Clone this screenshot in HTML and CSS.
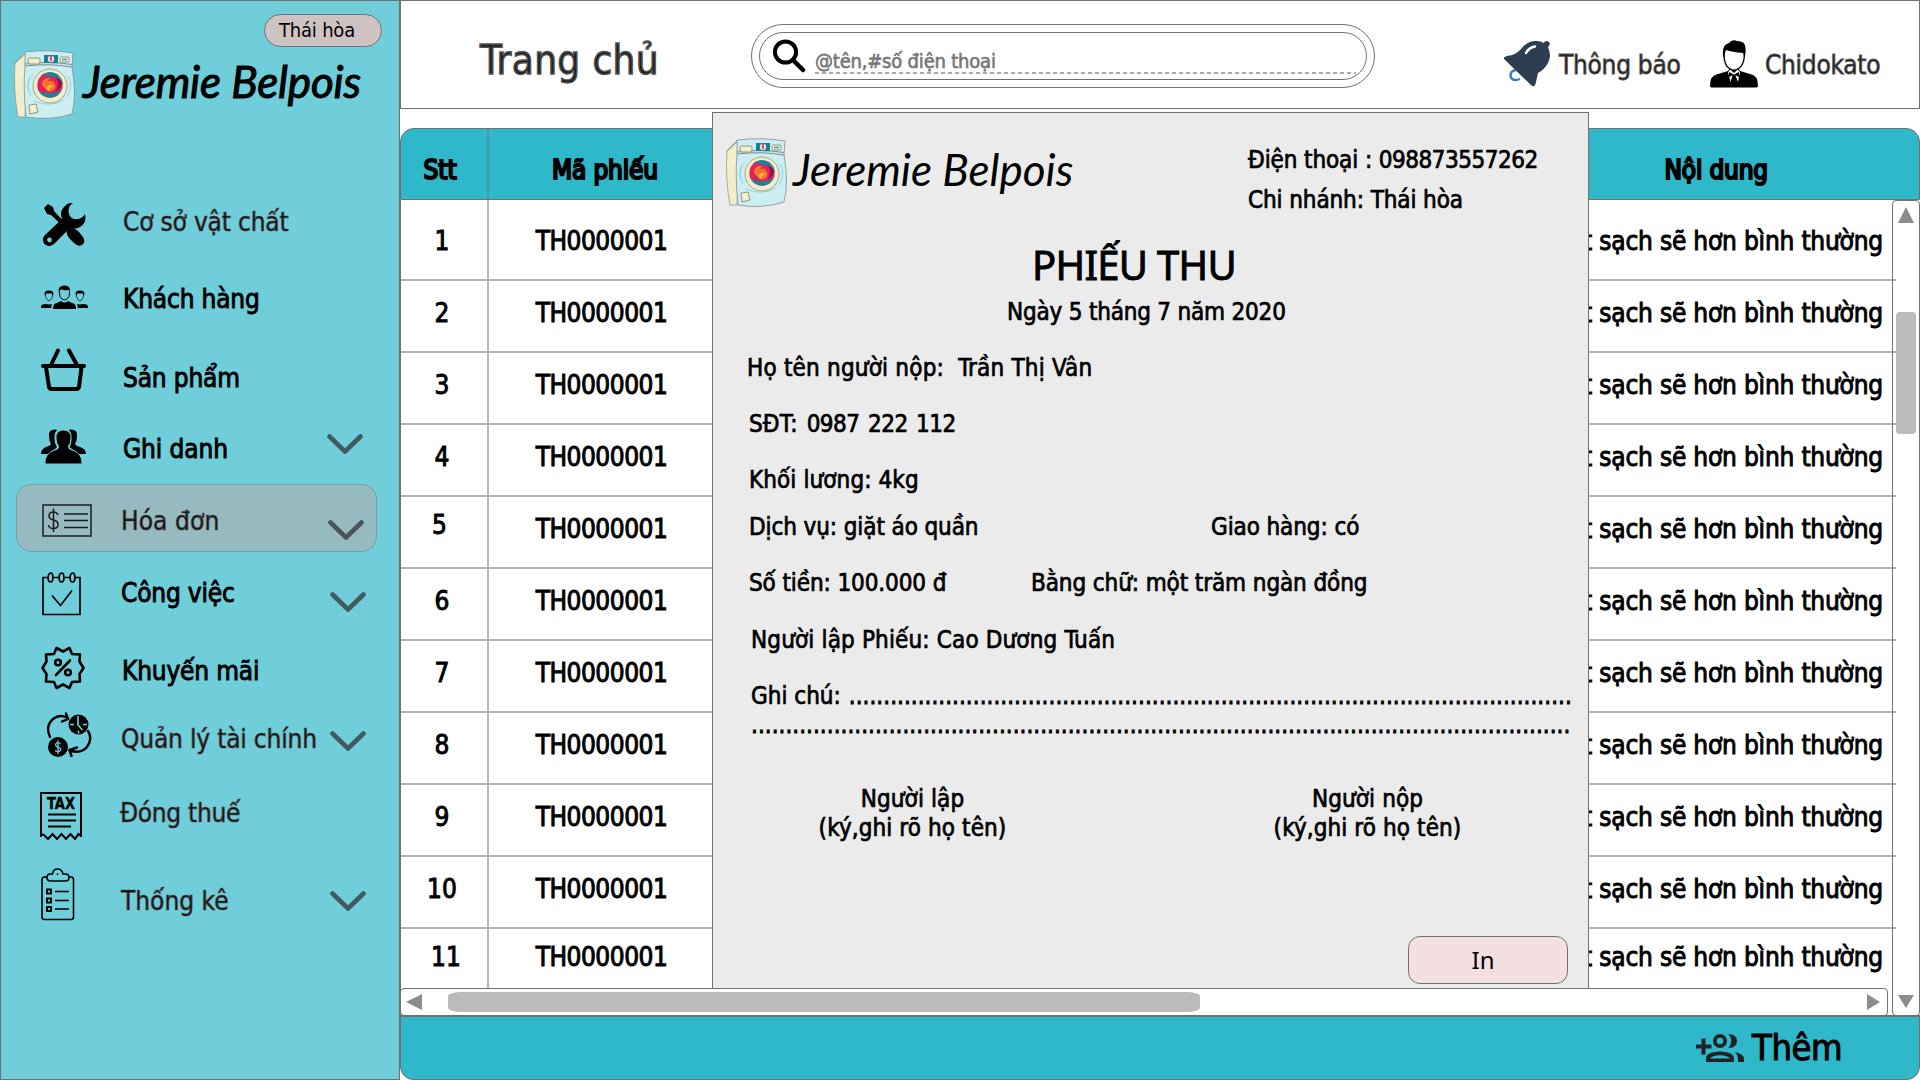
FILE: index.html
```html
<!DOCTYPE html>
<html lang="vi">
<head>
<meta charset="utf-8">
<title>Jeremie Belpois</title>
<link rel="stylesheet" href="styles.css">
</head>
<body>
<svg class="defs" width="0" height="0" aria-hidden="true">
  <symbol id="washer" viewBox="0 0 62 70">
    <path d="M1 13 L11 2 L14 17 L11 67 L4 67 Q-1 40 1 13Z" fill="#f0eecb" stroke="#8b8f86" stroke-width=".7"/>
    <path d="M11 2 Q35 -1 59 3 L58 17 Q63 45 58 64 Q36 71 12 67 Q9 40 11 16Z" fill="#cdeef1" stroke="#7d8f94" stroke-width=".8"/>
    <path d="M11 16 Q35 13 58 17 M1 13 L11 4 M11 14 Q35 11 58 14.500" fill="none" stroke="#6f7f86" stroke-width=".9"/>
    <rect x="14" y="8" width="12" height="6" rx="2" fill="#f0eecb" stroke="#86816b" stroke-width=".8"/>
    <rect x="30" y="5" width="14" height="8" fill="#127f97"/>
    <circle cx="37" cy="9" r="3.200" fill="#e9e1d3"/><path d="M37 6v5" stroke="#d0234e" stroke-width="1.500"/>
    <rect x="46" y="7" width="9" height="5" rx="1" fill="#f0eecb" stroke="#86816b" stroke-width=".8"/><path d="M48 9.500h5" stroke="#2ba4b6" stroke-width="1.500"/>
    <path d="M16 27 Q11 36 17 46 M19 24 Q12 32 15 42 M55 27 Q59 38 53 47 M20 51 Q35 58 50 50" fill="none" stroke="#8ed6de" stroke-width="1"/>
    <circle cx="36" cy="36" r="17" fill="#f0eecb" stroke="#a39d7d" stroke-width=".9"/>
    <circle cx="36" cy="35" r="12.700" fill="#e41f5c"/>
    <path d="M36 22.300 A12.700 12.700 0 0 1 48.700 35 Q44 25 36 27 Q30 23 26 27 A12.700 12.700 0 0 1 36 22.300Z" fill="#15889b"/>
    <path d="M24 39 Q28 44 36 43 Q43 44 48 38 A12.700 12.700 0 0 1 36 47.700 A12.700 12.700 0 0 1 24 39Z" fill="#15889b"/>
    <path d="M41 26 Q47 33 42 41 Q48 38 48 32Z" fill="#8e1044"/>
    <path d="M28 35 Q28 27 37 28 Q31 31 31 38Z" fill="#f0842a"/>
    <circle cx="36" cy="36" r="5.500" fill="#f4702b"/><path d="M32 38 Q36 32 40 37 Q37 36 35 41Z" fill="#ffb13d"/>
    <path d="M15 55 L22 54 L24 62 L16 64Z" fill="#f0eecb" stroke="#8d8a72" stroke-width=".9"/>
  </symbol>
  <symbol id="chevron" viewBox="0 0 36 20">
    <path d="M2.500 2.500 L18 17.500 L33.500 2.500" fill="none" stroke="#333" stroke-opacity=".75" stroke-width="4.600" stroke-linecap="round"/>
  </symbol>
</svg>

<div class="app">
  <aside class="sidebar">
    <div class="branch">Thái hòa</div>
    <div class="brand"><svg class="brand-icon"><use href="#washer"/></svg><span class="brand-name">Jeremie Belpois</span></div>
    <ul class="menu">
      <li class="item facility light">
        <span class="ic"><svg width="44" height="44" viewBox="0 0 44 44"><path d="M2 5 L6 1 L11 4 L12 8 L28 25 Q33 25 37 29 L41 34 Q44 39 40 42 Q36 44 32 40 L27 35 Q24 31 25 27 L9 12 L5 11Z"/><path d="M31 0 Q25 4 27 11 Q29 17 35 16 Q40 16 43 11 Q45 20 38 24 Q33 27 28 25 L12 41 Q7 45 2.500 41 Q-1 36 3 32 L20 16 Q17 8 23 3 Q27 -1 31 0Z"/><circle cx="7.500" cy="37" r="2.400" fill="#70ceda"/></svg></span>
        <span class="label">Cơ sở vật chất</span></li>
      <li class="item customers">
        <span class="ic"><svg width="47" height="26" viewBox="0 0 47 26"><path d="M12 24 Q12 18 16 18 L20 16 Q23.500 19 27 16 L31 18 Q35 18 35 24Z"/><path d="M18.500 7 Q18 12 21 14 Q23.500 16 26 14 Q29 12 28.500 7" fill="none" stroke="#000" stroke-width="1"/><path d="M18 8 Q16 1 23 .5 Q30 0 29 8 L28 5 Q22 6 20 4Z"/><path d="M0 23 Q-1 19 5 19 L8 19.500 L11 19 Q10 21 10.500 23Z M47 23 Q48 19 42 19 L39 19.500 L36 19 Q37 21 36.500 23Z"/><path d="M4.500 9 Q4 14 8 16 Q12 14 11.500 9 M35.500 9 Q35 14 39 16 Q43 14 42.500 9" fill="none" stroke="#000" stroke-width=".7"/><path d="M4 11 Q2 5.500 8 5.500 Q14 5.500 12 11 L11 8.500 L5 8.500Z M35 11 Q33 5.500 39 5.500 Q45 5.500 43 11 L42 8.500 L36 8.500Z"/></svg></span>
        <span class="label">Khách hàng</span></li>
      <li class="item products">
        <span class="ic"><svg width="45" height="44" viewBox="0 0 45 44" fill="none" stroke="#000" stroke-width="4" stroke-linecap="round" stroke-linejoin="round"><path d="M2 18H43M10 17 L17 2.500M36 17 L28 2.500M5 19 L8 39 Q8.500 41 11 41 H35 Q37.500 41 38 39 L40.500 19"/></svg></span>
        <span class="label">Sản phẩm</span></li>
      <li class="item enroll">
        <span class="ic"><svg width="45" height="35" viewBox="0 0 45 35"><path d="M15 .5 Q7 0 8 7 Q8 12 10 15 Q9 17 5 18 Q0 20 0 25 H7 Q9 22 14 20 L16 18 Q13 14 13.500 7 Q14 3 16 1Z M29 .5 Q37 0 36 7 Q36 12 34 15 Q35 17 39 18 Q45 20 45 25 H38 Q36 22 31 20 L28.500 18 Q31 14 30.500 7 Q30 3 28 1Z"/><path d="M22.500 1.500 Q15 1.500 15.500 9 Q15.500 14 18 17 Q18 20 15 21 Q4 24 4.500 34.500 H40.500 Q41 24 30 21 Q27 20 27 17 Q29.500 14 29.500 9 Q30 1.500 22.500 1.500Z"/></svg></span>
        <span class="label">Ghi danh</span><svg class="chev"><use href="#chevron"/></svg></li>
      <li class="item invoices light active">
        <span class="ic"><svg width="50" height="33" viewBox="0 0 50 33" fill="none" stroke="#1c1c1c" stroke-width="1.500"><path d="M1 1H49V32H1ZM22 10H46M22 16.500H46M22 23.500H46"/><path d="M16 11 Q15 8 11.500 8 Q7 8 7 12 Q7 15 11.500 16 Q16 17 16 20.500 Q16 24.500 11.500 24.500 Q7 24.500 6.500 21M11.500 4.500V28"/></svg></span>
        <span class="label">Hóa đơn</span><svg class="chev"><use href="#chevron"/></svg></li>
      <li class="item tasks">
        <span class="ic"><svg width="39" height="44" viewBox="0 0 39 44" fill="none" stroke="#000" stroke-width="1.700"><path d="M6 5.500H1V42.500H38V5.500H33M11.500 5.500H17M22.500 5.500H28"/><ellipse cx="8.500" cy="5.500" rx="2.400" ry="4.500"/><ellipse cx="19.500" cy="5.500" rx="2.400" ry="4.500"/><ellipse cx="30.500" cy="5.500" rx="2.400" ry="4.500"/><path d="M10 23.500 L18.500 33.500 L30 18.500"/></svg></span>
        <span class="label">Công việc</span><svg class="chev"><use href="#chevron"/></svg></li>
      <li class="item promo">
        <span class="ic"><svg width="44" height="44" viewBox="0 0 44 44" fill="none" stroke="#000" stroke-width="2.600" stroke-linejoin="round" stroke-linecap="round"><path d="M22 5.500 L28.500 2 L31 8 L39 8.500 L38.500 15.500 L42.500 22 L38.500 28 L39 35.500 L31 36 L28.500 42 L22 38.500 L15.500 42 L13 36 L5 35.500 L5.500 28 L1.500 22 L5.500 15.500 L5 8.500 L13 8 L15.500 2Z"/><path d="M29 14.500 L15 29"/><circle cx="17" cy="16.500" r="2.800"/><circle cx="27" cy="26.500" r="2.800"/></svg></span>
        <span class="label">Khuyến mãi</span></li>
      <li class="item finance light">
        <span class="ic"><svg width="46" height="45" viewBox="0 0 46 45"><g fill="none" stroke="#000" stroke-width="2.400" stroke-linecap="round"><path d="M4 25 Q-1 14 7 7 Q13 2 21 5.500M20 1.500 L22 7 L16 9.500M42 19 Q47 27 41 35 Q35 42 24 38.500M31 35.500 L23.500 38 L25.500 44"/></g><circle cx="32.500" cy="12.500" r="10"/><circle cx="12" cy="35" r="10"/><g fill="none" stroke="#70ceda"><path d="M32 4V13L36.500 18" stroke-width="1.600"/><path d="M24 12.500h4M37 12.500h4M32.500 18.500v3" stroke-width="1.500"/><path d="M14.500 32 Q12 29.500 10 31.500 Q8.500 34 12 35 Q15.500 36 14.500 38.500 Q12 41 9 38.500M12 28.500V42" stroke-width="1.300"/></g></svg></span>
        <span class="label">Quản lý tài chính</span><svg class="chev"><use href="#chevron"/></svg></li>
      <li class="item tax light">
        <span class="ic"><svg width="43" height="48" viewBox="0 0 43 48" fill="none" stroke="#000" stroke-width="2"><path d="M1 45V1H41V45M1 42 L4 43 L8 47 L12.500 42 L17 47 L21.500 42 L26 47 L30.500 42 L35 47 L38.500 42 L41 44M8 22.500H36M8 28.500H36M8 34.500H31"/><text class="tax-text" x="7" y="17" textLength="28" lengthAdjust="spacingAndGlyphs">TAX</text></svg></span>
        <span class="label">Đóng thuế</span></li>
      <li class="item stats light">
        <span class="ic"><svg width="34" height="53" viewBox="0 0 34 53" fill="none" stroke="#000" stroke-width="1.600"><path d="M6 9H3.500Q1 9 1 12V49Q1 51.500 3.500 51.500H30Q32.500 51.500 32.500 49V12Q32.500 9 30 9H28"/><path d="M9 6H11.500Q12 1 16.500 1Q21 1 22 6H24.500Q28 6 28 9.500Q28 13 24.500 13H9.500Q6 13 6 9.500Q6 6 9 6Z"/><path d="M16.500 5.500v1.500"/><path d="M14 23.500H28M14 32.500H28M14 41H28"/><g stroke-width="2"><path d="M6 21.500h4v4h-4zM6 30.500h4v4h-4zM6 39h4v4h-4z"/></g></svg></span>
        <span class="label">Thống kê</span><svg class="chev"><use href="#chevron"/></svg></li>
    </ul>
  </aside>

  <main class="main">
    <header class="topbar">
      <h1 class="page-title">Trang chủ</h1>
      <div class="search"><div class="search-inner">
        <svg width="34" height="34" viewBox="0 0 34 34" fill="none" stroke="#000"><circle cx="13.500" cy="13" r="10.600" stroke-width="4"/><path d="M21 21 L31 31" stroke-width="4.500" stroke-linecap="round"/></svg>
        <div class="search-field">@tên,#số điện thoại</div>
      </div></div>
      <div class="notice">
        <svg width="47" height="48" viewBox="0 0 47 48"><path d="M12 30 Q6 31 6.500 36 Q8 42 16 39" fill="none" stroke="#2f7cc4" stroke-width="2.400"/><path d="M0 19 Q-1 17 3 16 Q12 15 17 9 Q24 0 33 1 Q37 1 39.500 3 Q42 -.5 45 2 Q47 4 44 7 Q48 16 44 23 Q40 30 34 33 Q33 38 31.500 44 Q30 48 27 45Z" fill="#2c3e50"/><path d="M22 13 Q25 7.500 31 6.500" fill="none" stroke="#fff" stroke-width="2.400" stroke-linecap="round"/></svg>
        <span>Thông báo</span>
      </div>
      <div class="user">
        <svg width="48" height="48" viewBox="0 0 48 48"><path d="M14 14 Q14 26 20 29 Q24 31.500 28 29 Q34 26 34.500 14" fill="#fff" stroke="#000" stroke-width="1.300"/><path d="M13.500 18 Q11 5 19 3 Q22 -1 27 1 Q36 1 35.500 9 Q36 13 34.500 18 L33 13 Q22 12 16 10Z"/><path d="M0 46 Q0 35 8 34 L18 31 L20 28 L24 31 L28 28 L30 31 L40 34 Q48 35 48 46 Q48 47.500 46 47.500 H2 Q0 47.500 0 46Z"/><path d="M18 32 L20.500 29.500 L24 33 L27.500 29.500 L30 32 L28 42 L25.500 35.500 L24 34.500 L22.500 35.500 L20.500 42Z" fill="#fff"/><path d="M24 34.500 L19 32 V37Z M24 34.500 L29 32 V37Z M23 35h2l1.500 8h-5Z"/></svg>
        <span>Chidokato</span>
      </div>
    </header>

    <section class="table">
      <div class="thead"><div class="c-no">Stt</div><div class="c-code">Mã phiếu</div><div class="c-note">Nội dung</div></div>
      <div class="tbody">
        <div class="rows">
          <div class="row first"><div class="c-no">1</div><div class="c-code">TH0000001</div><div class="c-note">Giặt sạch sẽ hơn bình thường</div></div>
          <div class="row"><div class="c-no">2</div><div class="c-code">TH0000001</div><div class="c-note">Giặt sạch sẽ hơn bình thường</div></div>
          <div class="row"><div class="c-no">3</div><div class="c-code">TH0000001</div><div class="c-note">Giặt sạch sẽ hơn bình thường</div></div>
          <div class="row"><div class="c-no">4</div><div class="c-code">TH0000001</div><div class="c-note">Giặt sạch sẽ hơn bình thường</div></div>
          <div class="row"><div class="c-no raised">5</div><div class="c-code">TH0000001</div><div class="c-note">Giặt sạch sẽ hơn bình thường</div></div>
          <div class="row"><div class="c-no">6</div><div class="c-code">TH0000001</div><div class="c-note">Giặt sạch sẽ hơn bình thường</div></div>
          <div class="row"><div class="c-no">7</div><div class="c-code">TH0000001</div><div class="c-note">Giặt sạch sẽ hơn bình thường</div></div>
          <div class="row"><div class="c-no">8</div><div class="c-code">TH0000001</div><div class="c-note">Giặt sạch sẽ hơn bình thường</div></div>
          <div class="row"><div class="c-no">9</div><div class="c-code">TH0000001</div><div class="c-note">Giặt sạch sẽ hơn bình thường</div></div>
          <div class="row"><div class="c-no">10</div><div class="c-code">TH0000001</div><div class="c-note">Giặt sạch sẽ hơn bình thường</div></div>
          <div class="row last"><div class="c-no">11</div><div class="c-code">TH0000001</div><div class="c-note">Giặt sạch sẽ hơn bình thường</div></div>
        </div>
        <div class="hscroll">
          <svg width="16" height="16" viewBox="0 0 16 16"><path d="M0 8L16 0V16Z" fill="#8f8b8b"/></svg>
          <div class="hthumb"></div>
          <svg class="right" width="13" height="16" viewBox="0 0 13 16"><path d="M13 8L0 0V16Z" fill="#8f8b8b"/></svg>
        </div>
        <div class="vscroll">
          <svg width="16" height="16" viewBox="0 0 16 16"><path d="M8 0L16 16H0Z" fill="#8f8b8b"/></svg>
          <div class="vthumb"></div>
          <svg class="down" width="16" height="13" viewBox="0 0 16 13"><path d="M8 13L16 0H0Z" fill="#8f8b8b"/></svg>
        </div>
      </div>
    </section>

    <footer class="footer">
      <svg width="48" height="28" viewBox="0 0 48 28" fill="#222"><path d="M5.500 4.500h4v6h6v4h-6v6h-4v-6H0v-4h5.500z"/><path fill-rule="evenodd" d="M24 0a7 7 0 1 1 0 14a7 7 0 0 1 0-14M24 3.800a3.200 3.200 0 1 0 0 6.400a3.200 3.200 0 0 0 0-6.400M10 28V24.500Q10 18 24 17.500Q38 18 38 24.500V28ZM14 24.500H34Q32 21.500 24 21.200Q16 21.500 14 24.500"/><path d="M32.500 0Q41 .5 41 7Q41 13.500 32.500 14Q38 7 32.500 0ZM39 18Q48 20 48 25V28H42V24.500Q42 21 39 18Z"/></svg>
      <span>Thêm</span>
    </footer>

    <article class="receipt">
      <div class="receipt-head">
        <svg class="brand-icon"><use href="#washer"/></svg><span class="brand-name thin">Jeremie Belpois</span>
        <div class="contact"><div>Điện thoại : <span class="num">098873557262</span></div><div>Chi nhánh: Thái hòa</div></div>
      </div>
      <h2 class="receipt-title">PHIẾU THU</h2>
      <p class="date">Ngày 5 tháng 7 năm 2020</p>
      <p class="payer">Họ tên người nộp:&nbsp; Trần Thị Vân</p>
      <p class="tel">SĐT: <span class="num">0987 222 112</span></p>
      <p class="weight">Khối lương: 4kg</p>
      <p class="service"><span>Dịch vụ: giặt áo quần</span><span>Giao hàng: có</span></p>
      <p class="amount"><span>Số tiền: 100.000 đ</span><span>Bằng chữ: một trăm ngàn đồng</span></p>
      <p class="author">Người lập Phiếu: Cao Dương Tuấn</p>
      <p class="note"><span>Ghi chú:</span><span class="dots">.........................................................................................................</span></p>
      <p class="note-more dots">.......................................................................................................................</p>
      <div class="signs"><div>Người lập<br>(ký,ghi rõ họ tên)</div><div>Người nộp<br>(ký,ghi rõ họ tên)</div></div>
      <button class="print">In</button>
    </article>
  </main>
</div>
</body>
</html>
```
FILE: styles.css
```css
* { box-sizing: border-box; }
body { margin: 0; background: #fff; color: #000; font: 26px/32px "DejaVu Sans Condensed", "DejaVu Sans", sans-serif; }
h1, h2, p, ul { margin: 0; padding: 0; font-weight: normal; list-style: none; }
svg { display: block; flex: none; }
.defs { position: absolute; }
.app { display: grid; grid-template-columns: 400px 1520px; width: 1920px; height: 1080px; overflow: hidden; }

/* Sidebar */
.sidebar { display: flex; flex-direction: column; background: #70ceda; border: 1px solid #707070; }
.branch { align-self: flex-end; width: 118px; height: 33px; margin: 13px 17px 0 0; padding-left: 14px; border: 1px solid #707070; border-radius: 16.5px; background: #cfc2c3; font-size: 20px; line-height: 31px; letter-spacing: -.2px; }
.brand { display: flex; margin: 3px 0 0 13px; }
.brand-icon { width: 62px; height: 70px; }
.brand-name { font: italic 44px/52px Lato, sans-serif; letter-spacing: -.15px; -webkit-text-stroke: 1px #000; margin: 5px 0 0 7px; white-space: nowrap; }
.brand-name.thin { -webkit-text-stroke: 0; letter-spacing: 0; }
.menu { display: flex; flex-direction: column; margin-top: 71px; }
.item { display: flex; align-items: center; height: 60px; flex: none; margin: 0 22px 0 15px; letter-spacing: -.18px; -webkit-text-stroke: .9px #000; }
.item.light { color: #111; -webkit-text-stroke: .7px #4d4547; }
.ic { width: 105px; flex: none; padding-left: 25px; }
.label { flex: 1; padding-top: 1px; white-space: nowrap; }
.chev { width: 36px; height: 20px; margin-right: 11px; }
.tax-text { font: 900 15px "DejaVu Sans", sans-serif; fill: #000; stroke: #000; stroke-width: .4px; letter-spacing: 0; -webkit-text-stroke: 0; }
.facility .ic { padding: 7px 0 0 26px; width: 107px; }
.customers { margin-top: 17px; }
.customers .ic, .products .ic, .enroll .ic { width: 107px; }
.products { margin-top: 19px; }
.products .ic { padding-bottom: 14px; }
.enroll { margin-top: 11px; letter-spacing: -.1px; }
.enroll .ic { padding-bottom: 3px; }
.enroll .chev { margin: 0 14px 8px 0; }
.invoices { height: 68px; margin-top: 6px; letter-spacing: .1px; }
.active { background: #95bbc1; border: 1px solid #779fa5; border-radius: 15px; }
.invoices .label { padding-top: 5px; margin-left: -1px; }
.invoices .ic { padding-top: 4px; }
.invoices .chev { margin: 23px 12px 0 0; }
.tasks { margin-top: 10px; }
.tasks .ic { padding: 4px 0 0 26px; }
.tasks .chev { margin-top: 20px; }
.promo { margin-top: 18px; }
.promo .ic { padding-bottom: 4px; width: 106px; }
.finance { margin-top: 8px; }
.finance .ic { padding: 0 0 8px 30px; }
.finance .chev { margin-top: 5px; }
.tax { margin-top: 14px; letter-spacing: -.3px; }
.tax .ic { padding: 8px 0 0 24px; width: 104px; }
.stats { margin-top: 28px; letter-spacing: 0; }
.stats .ic { padding-bottom: 12px; }
.stats .chev { margin-top: 2px; }

/* Top bar */
.main { position: relative; display: flex; flex-direction: column; height: 1080px; }
.topbar { display: flex; height: 109px; border: 1px solid #707070; white-space: nowrap; }
.page-title { width: 350px; padding: 34px 0 0 79px; font-size: 40px; line-height: 50px; letter-spacing: .4px; color: #222; -webkit-text-stroke: 1.3px #555; }
.search { width: 624px; height: 64px; margin-top: 23px; padding: 7px; border: 1px solid #707070; border-radius: 32px; }
.search-inner { display: flex; height: 48px; border: 1px solid #707070; border-radius: 24px; padding: 6px 10px 0 12px; }
.search-field { flex: 1; height: 35px; margin-left: 9px; padding-top: 8px; font-size: 20px; line-height: 28px; letter-spacing: -.2px; color: #777; -webkit-text-stroke: .6px #777;
  background: repeating-linear-gradient(90deg, #aaa 0 4px, transparent 4px 7px) bottom left / 100% 2px no-repeat; }
.notice, .user { display: flex; padding-top: 39px; color: #1c1c1c; -webkit-text-stroke: .8px #555; letter-spacing: -.28px; }
.notice { margin-left: 129px; width: 206px; }
.notice span { margin: 9px 0 0 8px; }
.user span { margin: 9px 0 0 7px; }

/* Table */
.table { margin-top: 19px; -webkit-text-stroke: .9px #000; }
.thead { display: flex; height: 72px; border: 1px solid #707070; border-radius: 14px 14px 0 0; background: #2fb7ca; line-height: 82px; -webkit-text-stroke: 2px #000; }
.c-no { width: 88px; border-right: 2px solid #b7b7b7; text-align: center; padding-right: 4px; }
.thead .c-no { border-color: #5093a0; padding-right: 8px; }
.c-code { width: 225px; text-align: center; letter-spacing: -.5px; }
.thead .c-code { padding-left: 7px; letter-spacing: -.2px; }
.c-note { flex: 1; text-align: right; padding-right: 13px; letter-spacing: -.2px; }
.thead .c-note { padding-right: 151px; }
.tbody { display: grid; grid-template: 788px 28px / 1488px 4px 28px; border: solid #707070; border-width: 0 0 0 1px; }
.rows { grid-area: 1 / 1 / 2 / 3; width: 1495px; }
.row { display: flex; height: 72px; border-bottom: 2px solid #b7b7b7; line-height: 65px; }
.row.first { height: 81px; line-height: 83px; }
.row.last { height: 59px; line-height: 57px; border: 0; }
.last .c-no { padding-right: 0; padding-left: 4px; }
.c-no.raised { line-height: 57px; padding-right: 9px; }
.hscroll { grid-area: 2 / 1; display: flex; align-items: center; margin: 0 1px 0 -1px; border: 1px solid #707070; border-radius: 4px; padding: 0 7px 0 5px; background: #fff; }
.hthumb { width: 752px; height: 20px; margin-left: 26px; border-radius: 14px / 4px; background: #bcbbba; }
.right { margin-left: auto; }
.vscroll { grid-area: 1 / 3 / 3 / 4; display: flex; flex-direction: column; align-items: center; margin: 0 1px 0 -1px; border: 1px solid #707070; border-radius: 4px; padding: 6px 0 7px; }
.vthumb { width: 20px; height: 122px; margin-top: 89px; border-radius: 4px; background: #bcbbba; }
.down { margin-top: auto; }

/* Footer */
.footer { display: flex; height: 65px; margin-top: -1px; border: 1px solid #707070; border-top-width: 2px; border-radius: 0 0 14px 14px; background: #2fb7ca; padding: 17px 0 0 1295px; font-size: 36px; line-height: 40px; letter-spacing: -.4px; -webkit-text-stroke: 1px #000; }
.footer span { margin: -6px 0 0 8px; }

/* Receipt window */
.receipt { position: absolute; left: 312px; top: 112px; width: 877px; height: 876px; background: #ebebeb; border: 1px solid #707070; border-bottom: 0; font-size: 24px; line-height: 28px; letter-spacing: -.1px; -webkit-text-stroke: .7px #000; white-space: nowrap; }
.receipt-head { display: flex; height: 128px; padding: 25px 0 0 13px; }
.receipt-head .brand-name { margin-left: 5px; }
.contact { margin: 2px 0 0 auto; width: 340px; line-height: 40px; }
.num { letter-spacing: -.5px; }
.receipt-title { font: 40px/48px "Noto Sans", sans-serif; letter-spacing: -.7px; padding-left: 319px; -webkit-text-stroke: .9px #000; }
.date { margin: 9px 0 0 294px; letter-spacing: -.2px; }
.receipt p.payer { margin: 28px 0 0 34px; letter-spacing: .2px; }
.tel, .weight { margin: 28px 0 0 36px; letter-spacing: .1px; }
.tel { word-spacing: 2px; }
.service { display: flex; margin: 19px 0 0 36px; }
.service span:first-child { width: 462px; }
.amount { display: flex; margin: 28px 0 0 36px; }
.amount span:first-child { width: 282px; }
.author { margin: 29px 0 0 38px; letter-spacing: .15px; }
.note { display: flex; margin: 28px 0 0 38px; letter-spacing: 0; }
.note .dots { margin-left: 8px; }
.dots { letter-spacing: .03px; -webkit-text-stroke: .8px #000; }
.note-more { margin: 1px 0 0 38px; }
.signs { display: flex; gap: 254px; margin: 46px 0 0 99px; line-height: 29px; text-align: center; letter-spacing: .1px; }
.signs div { width: 201px; }
.print { display: block; width: 160px; height: 48px; margin: 93px 0 0 695px; padding: 0 10px 0 0; border: 1px solid #707070; border-radius: 12px; background: #f3dfe0; font: 24px/42px "Noto Sans", sans-serif; color: #000; -webkit-text-stroke: 0; }
```
